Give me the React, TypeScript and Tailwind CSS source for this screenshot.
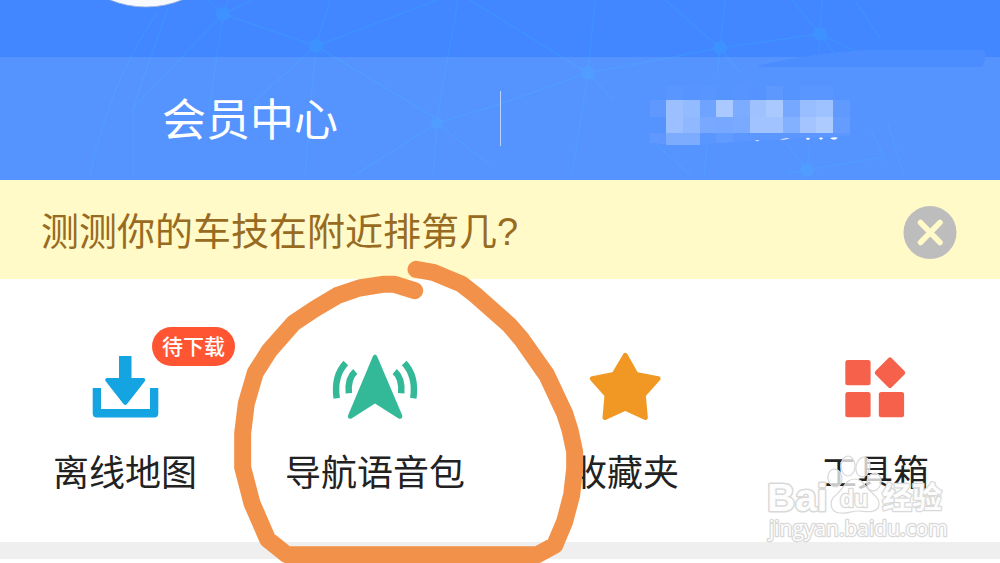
import type { ReactNode } from "react";

const nodes = [
  [223, 14, 7],
  [316, 46, 7],
  [437, 123, 6],
  [588, 73, 7],
  [720, 48, 7],
  [820, 34, 7],
  [807, 170, 7],
];

function Network() {
  return (
    <svg
      className="absolute inset-0 h-full w-full"
      viewBox="0 0 1000 180"
      preserveAspectRatio="xMidYMin slice"
      aria-hidden="true"
    >
      <g fill="none" stroke="#3f94ff" strokeWidth="1.5" opacity="0.75">
        <path d="M207 0L223 14L228 0M223 14L252 0M223 14L316 46L330 0M316 46L437 0M316 46L311 100L305 175M223 14L133 108M223 14L209 110M168 8L133 108V175M158 12Q110 80 90 175M316 46L250 105M316 46L437 119L458 0M470 0L588 73M437 123L497 105L588 73M437 123L355 175M437 123L433 175M437 123L490 165M588 73L595 0M588 73L720 48L665 0M588 73L572 175M588 73L613 100M720 48L725 0M720 48L820 34L792 0M720 48L717 75M720 48L740 72M820 34L822 0M820 34L819 55M820 34L835 54M820 34L855 51M855 0L880 38M786 143L807 170L884 157M810 143L807 170M807 170L788 174M871 130L886 162M888 125L904 175M657 145L690 175M707 145L704 175" />
      </g>
      {nodes.map(([x, y, r]) => (
        <circle key={x} cx={x} cy={y} r={r} fill="#3d93ff" opacity="0.85" />
      ))}
      <circle cx="146" cy="-89" r="96" fill="#f8f9ff" stroke="#8fa9d8" strokeWidth="0.8" />
    </svg>
  );
}

/* Opacity of each mosaic cell, row by row */
const mosaic = [
  [0, 3, 1, 2, 0, 1, 0, 5, 0, 3, 3, 0],
  [6, 41, 37, 15, 50, 23, 44, 50, 20, 40, 43, 7],
  [0, 42, 35, 21, 20, 22, 45, 45, 28, 46, 52, 9],
];

function Mosaic() {
  return (
    <svg className="h-[66px] w-[220px]" viewBox="0 0 660 198" aria-hidden="true">
      <g fill="#fff" transform="translate(-4 -8)" shapeRendering="crispEdges">
        {mosaic.map((row, r) =>
          row.map((a, c) => (
            <rect
              key={`${r}-${c}`}
              x={30 + c * 50}
              y={r * 50}
              width="50"
              height="50"
              opacity={a / 100}
            />
          )),
        )}
        <path d="M30 150H80V182L30 179Z" opacity="0.06" />
        <path d="M80 150H180V184L80 184Z" opacity="0.24" />
        <path d="M180 150H230V180L180 182Z" opacity="0.03" />
        <path d="M230 150H280V176L230 180Z" opacity="0.08" />
        <path d="M280 150H630V157L280 176Z" opacity="0.04" />
      </g>
      <path
        d="M341 164Q349 161 356 164L350 166ZM416 161Q430 155 446 157Q438 162 416 161ZM494 157Q500 154 508 157L501 163ZM533 156Q540 153 547 156L540 162ZM567 156Q580 152 591 155Q580 167 567 156Z"
        fill="#fff"
      />
    </svg>
  );
}

function DownloadIcon() {
  return (
    <svg className="h-[90px] w-[90px]" viewBox="0 0 90 90" aria-hidden="true" fill="#13a4e1">
      <path d="M39 16H51.500V38H64Q66 39 65 41L47 64Q45.300 66 43.500 64L25.500 41Q24.500 39 26.500 38H39Z" />
      <path d="M12.700 48H21V69H70V48H78.300V73.500Q78.300 77.500 74.300 77.500H16.700Q12.700 77.500 12.700 73.500Z" />
    </svg>
  );
}

function VoiceIcon() {
  return (
    <svg className="h-[90px] w-[90px]" viewBox="0 0 90 90" aria-hidden="true" fill="#34b998">
      <path d="M43 16Q45 13 47 16L72.300 75.500Q72.500 79.500 68.500 78.500L45 63.500L21.500 78.500Q17.500 79.500 18 75.500Z" />
      <path
        d="M15.800 23Q3.500 36 6.700 58.300M25.300 31.500Q17.500 38 18.800 53.300M74.200 23Q86.500 36 83.300 58.300M64.700 31.500Q72.500 38 71.200 53.300"
        fill="none"
        stroke="#34b998"
        strokeWidth="6.500"
      />
    </svg>
  );
}

function StarIcon() {
  return (
    <svg className="h-[90px] w-[90px]" viewBox="0 0 90 90" aria-hidden="true">
      <path
        d="M45.300 15.500L56 34.500L78 38.700L63.300 55L65.300 77.500L45.300 68.300L25 77.500L27 55L12.300 38.700L34 34.500Z"
        fill="#f09823"
        stroke="#f09823"
        strokeWidth="5"
        strokeLinejoin="round"
      />
    </svg>
  );
}

function ToolboxIcon() {
  return (
    <svg className="h-[90px] w-[90px]" viewBox="0 0 90 90" aria-hidden="true" fill="#f5614b">
      <rect x="15.300" y="20" width="25.300" height="25.300" rx="2.500" />
      <rect x="15.300" y="52" width="25.300" height="25.300" rx="2.500" />
      <rect x="48.800" y="52" width="25.300" height="25.300" rx="2.500" />
      <rect x="48.500" y="21.200" width="23" height="23" rx="2.500" transform="rotate(45 60 32.700)" />
    </svg>
  );
}

function Feature({ label, icon, badge }: { label: string; icon: ReactNode; badge?: string }) {
  return (
    <button type="button" className="relative flex flex-col items-center">
      {icon}
      {badge && (
        <span className="absolute left-1/2 top-0 ml-[27px] -mt-[13px] flex h-[39px] w-[83px] items-center justify-center rounded-full bg-[#ff5533] text-[21px] leading-none font-medium text-white">
          {badge}
        </span>
      )}
      <span className="mt-[17px] text-[36px] leading-[54px] text-[#222]">{label}</span>
    </button>
  );
}

function HandDrawnRing() {
  return (
    <svg
      className="pointer-events-none absolute left-[22%] -top-[29px] z-10 h-[313px] w-[380px]"
      viewBox="0 0 1140 939"
      aria-hidden="true"
    >
      <path
        d="M584 122L524 103H488L418 114L353 136L284 177L221 219L148 302L106 368L79 460L68 550V652L96 760L143 868L200 914H952L1004 886L1034 815L1055 735L1064 655V605L1050 540L1034 490L980 375L905 268L868 225L765 134L724 102L640 67L588 58"
        fill="none"
        stroke="#f2924a"
        strokeWidth="51"
        strokeLinecap="round"
        strokeLinejoin="round"
      />
    </svg>
  );
}

function Watermark() {
  return (
    <svg
      className="pointer-events-none absolute right-0 -bottom-[20px] h-[110px] w-[240px]"
      viewBox="0 0 240 110"
      fill="#fff"
      fillOpacity="0.75"
      stroke="#d9d9d9"
      strokeWidth="1.200"
      strokeLinejoin="round"
      fontFamily="'Liberation Sans', 'Noto Sans CJK SC', sans-serif"
      fontWeight="700"
    >
      <ellipse cx="75" cy="26" rx="7" ry="9" transform="rotate(-10 75 26)" />
      <ellipse cx="88" cy="14" rx="7" ry="10" />
      <ellipse cx="103" cy="15" rx="7" ry="10" transform="rotate(12 103 15)" />
      <ellipse cx="114" cy="30" rx="7" ry="9" transform="rotate(15 114 30)" />
      <path d="M95 27C85 27 84 37 76 43C69 48 69 60 80 61C88 62 91 59 98 59C105 59 113 62 118 56C122 48 114 43 109 38C104 33 102 27 95 27Z" />
      <g paintOrder="stroke" fillOpacity="0.95" strokeWidth="2.500">
        <text x="7" y="59" fontSize="39" strokeWidth="3">Bai</text>
        <text x="80" y="55" fontSize="23">du</text>
        <text x="122" y="56" fontSize="30">经验</text>
        <text x="9" y="84" fontSize="21" fontFamily="'Open Sans', sans-serif" fontWeight="400">
          jingyan.baidu.com
        </text>
      </g>
    </svg>
  );
}

export default function App() {
  return (
    <div className="min-h-screen overflow-hidden bg-white font-['Liberation_Sans','Noto_Sans_CJK_SC',sans-serif]">
      <header className="relative bg-[#4287ff] pt-[57px]">
        <Network />
        <nav className="relative grid h-[123px] grid-cols-2 items-center bg-white/10">
          <a href="#member" className="pt-[4px] text-center text-[44px] leading-[64px] text-white">
            会员中心
          </a>
          <a
            href="#scores"
            aria-label="积分"
            className="flex h-[55px] items-center justify-center border-l border-white/60"
          >
            <Mosaic />
          </a>
        </nav>
        <svg
          className="pointer-events-none absolute right-0 top-[48px] h-[20px] w-[250px]"
          viewBox="0 0 250 20"
          aria-hidden="true"
        >
          <path d="M8 18Q60 5 114 2H232Q236 2 235 10Q234 18 231 19H8Z" fill="#4b8cff" />
        </svg>
      </header>

      <section className="flex h-[99px] items-center justify-between bg-[#fffac8] pl-[41px] pr-[43px]">
        <p className="pt-[4px] text-[38px] leading-[56px] text-[#986b22]">
          测测你的车技在附近排第几?
        </p>
        <button type="button" aria-label="关闭" className="mt-[6px]">
          <svg className="h-[54px] w-[54px]" viewBox="0 0 54 54" aria-hidden="true">
            <circle cx="27" cy="26.500" r="26.500" fill="#bdbdbd" />
            <path
              d="M17.500 16.500L37 36.500M37 16.500L17.500 36.500"
              stroke="#fffac8"
              strokeWidth="5.500"
              strokeLinecap="round"
            />
          </svg>
        </button>
      </section>

      <main className="relative">
        <div className="grid grid-cols-4 pb-[41px] pt-[61px]">
          <Feature label="离线地图" icon={<DownloadIcon />} badge="待下载" />
          <Feature label="导航语音包" icon={<VoiceIcon />} />
          <Feature label="收藏夹" icon={<StarIcon />} />
          <Feature label="工具箱" icon={<ToolboxIcon />} />
        </div>
        <HandDrawnRing />
        <Watermark />
      </main>
      <div className="h-[17px] bg-[#efefef]" />
    </div>
  );
}
